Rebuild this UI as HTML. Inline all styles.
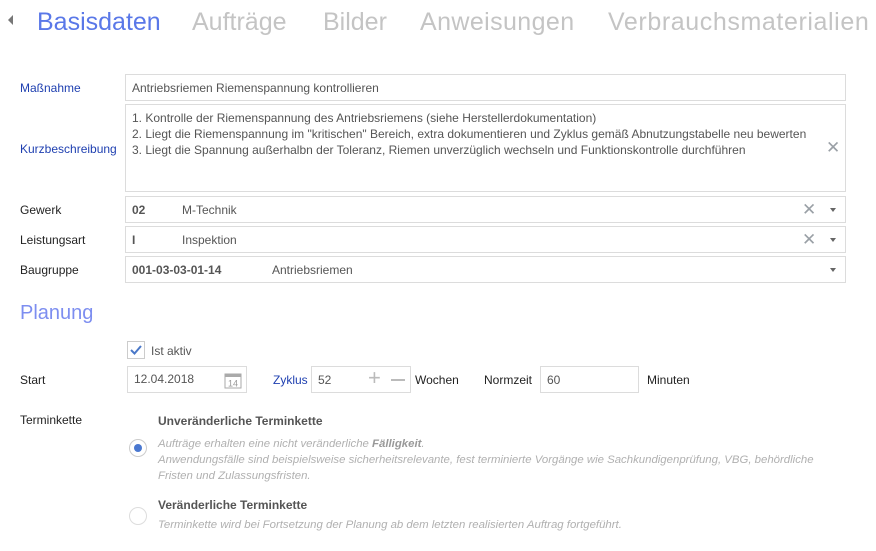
<!DOCTYPE html>
<html><head><meta charset="utf-8"><style>
*{box-sizing:border-box;margin:0;padding:0}
body{width:876px;height:551px;background:#fff;font-family:"Liberation Sans",sans-serif;position:relative;overflow:hidden;color:#222}
.a{position:absolute;white-space:nowrap}
.tab{font-size:25px;color:#c4c4c4;top:8px}
.lbl{font-size:12px;left:20px}
.box{position:absolute;border:1px solid #dcdcdc;background:#fff}
.t{font-size:12px;color:#555}
.x{position:absolute;font-size:17px;color:#9aa0a6;line-height:1}
.dd{position:absolute;width:0;height:0;border-left:3px solid transparent;border-right:3px solid transparent;border-top:4px solid #666}
.it{font-style:italic;color:#b0b0b0;font-size:11.4px}
</style></head><body>
<div class="a" style="left:8px;top:15px;width:0;height:0;border-top:5px solid transparent;border-bottom:5px solid transparent;border-right:5px solid #777"></div>
<div class="a tab" style="left:37px;color:#5a78e8">Basisdaten</div>
<div class="a tab" style="left:192px">Aufträge</div>
<div class="a tab" style="left:323px">Bilder</div>
<div class="a tab" style="left:420px;letter-spacing:0.4px">Anweisungen</div>
<div class="a tab" style="left:608px;letter-spacing:0.6px">Verbrauchsmaterialien</div>

<div class="a lbl" style="top:81px;color:#1e3fb0">Maßnahme</div>
<div class="box" style="left:125px;top:74px;width:721px;height:27px"><span class="a t" style="left:6px;top:6px">Antriebsriemen Riemenspannung kontrollieren</span></div>
<div class="a lbl" style="top:142px;color:#1e3fb0">Kurzbeschreibung</div>
<div class="box" style="left:125px;top:104px;width:721px;height:88px">
<div class="a t" style="left:6px;top:5px;line-height:16px">1. Kontrolle der Riemenspannung des Antriebsriemens (siehe Herstellerdokumentation)<br>2. Liegt die Riemenspannung im "kritischen" Bereich, extra dokumentieren und Zyklus gemäß Abnutzungstabelle neu bewerten<br>3. Liegt die Spannung außerhalbn der Toleranz, Riemen unverzüglich wechseln und Funktionskontrolle durchführen</div>
<div class="x" style="left:700px;top:34px">✕</div></div>

<div class="a lbl" style="top:203px">Gewerk</div>
<div class="box" style="left:125px;top:196px;width:721px;height:27px"><span class="a t" style="left:6px;top:6px;font-weight:bold">02</span><span class="a t" style="left:56px;top:6px">M-Technik</span><div class="x" style="left:676px;top:4px">✕</div><div class="dd" style="left:704px;top:11px"></div></div>
<div class="a lbl" style="top:233px">Leistungsart</div>
<div class="box" style="left:125px;top:226px;width:721px;height:27px"><span class="a t" style="left:6px;top:6px;font-weight:bold">I</span><span class="a t" style="left:56px;top:6px">Inspektion</span><div class="x" style="left:676px;top:4px">✕</div><div class="dd" style="left:704px;top:11px"></div></div>
<div class="a lbl" style="top:263px">Baugruppe</div>
<div class="box" style="left:125px;top:256px;width:721px;height:27px"><span class="a t" style="left:6px;top:6px;font-weight:bold">001-03-03-01-14</span><span class="a t" style="left:146px;top:6px">Antriebsriemen</span><div class="dd" style="left:704px;top:11px"></div></div>

<div class="a" style="left:20px;top:302px;font-size:20px;color:#7d8ef0">Planung</div>
<div class="box" style="left:127px;top:341px;width:18px;height:18px;border-color:#ccc"><svg width="16" height="16" style="position:absolute;left:0;top:0"><path d="M3 8 L6.5 11.5 L13 4" fill="none" stroke="#4a78c8" stroke-width="2"/></svg></div>
<div class="a t" style="left:151px;top:344px">Ist aktiv</div>
<div class="a lbl" style="top:373px">Start</div>
<div class="box" style="left:127px;top:366px;width:120px;height:27px"><span class="a t" style="left:6px;top:5px">12.04.2018</span>
<svg class="a" style="left:96px;top:4px" width="18" height="18"><rect x="1" y="3" width="16" height="14" fill="none" stroke="#aaa"/><rect x="1" y="3" width="16" height="3" fill="#aaa"/><text x="9" y="15.5" font-size="9" text-anchor="middle" fill="#999" font-family="Liberation Sans">14</text></svg></div>
<div class="a" style="left:273px;top:373px;font-size:12px;color:#1e3fb0">Zyklus</div>
<div class="box" style="left:311px;top:366px;width:100px;height:27px"><span class="a t" style="left:6px;top:6px">52</span><span class="a" style="left:56px;top:-2px;font-size:22px;color:#bbb">+</span><span class="a" style="left:79px;top:12px;width:14px;height:2px;background:#bbb"></span></div>
<div class="a" style="left:415px;top:373px;font-size:12px">Wochen</div>
<div class="a" style="left:484px;top:373px;font-size:12px">Normzeit</div>
<div class="box" style="left:540px;top:366px;width:99px;height:27px"><span class="a t" style="left:6px;top:6px">60</span></div>
<div class="a" style="left:647px;top:373px;font-size:12px">Minuten</div>

<div class="a lbl" style="top:413px">Terminkette</div>
<div class="a" style="left:158px;top:414px;font-size:12px;font-weight:bold;color:#555">Unveränderliche Terminkette</div>
<div class="a" style="left:129px;top:439px;width:18px;height:18px;border:1px solid #ccc;border-radius:50%"><div style="position:absolute;left:4px;top:4px;width:8px;height:8px;border-radius:50%;background:#4a78d0"></div></div>
<div class="a it" style="left:158px;top:436px;line-height:16px">Aufträge erhalten eine nicht veränderliche <b style="color:#999">Fälligkeit</b>.<br>Anwendungsfälle sind beispielsweise sicherheitsrelevante, fest terminierte Vorgänge wie Sachkundigenprüfung, VBG, behördliche<br>Fristen und Zulassungsfristen.</div>
<div class="a" style="left:158px;top:498px;font-size:12px;font-weight:bold;color:#555">Veränderliche Terminkette</div>
<div class="a" style="left:129px;top:507px;width:18px;height:18px;border:1px solid #ddd;border-radius:50%"></div>
<div class="a it" style="left:158px;top:519px">Terminkette wird bei Fortsetzung der Planung ab dem letzten realisierten Auftrag fortgeführt.</div>
</body></html>
